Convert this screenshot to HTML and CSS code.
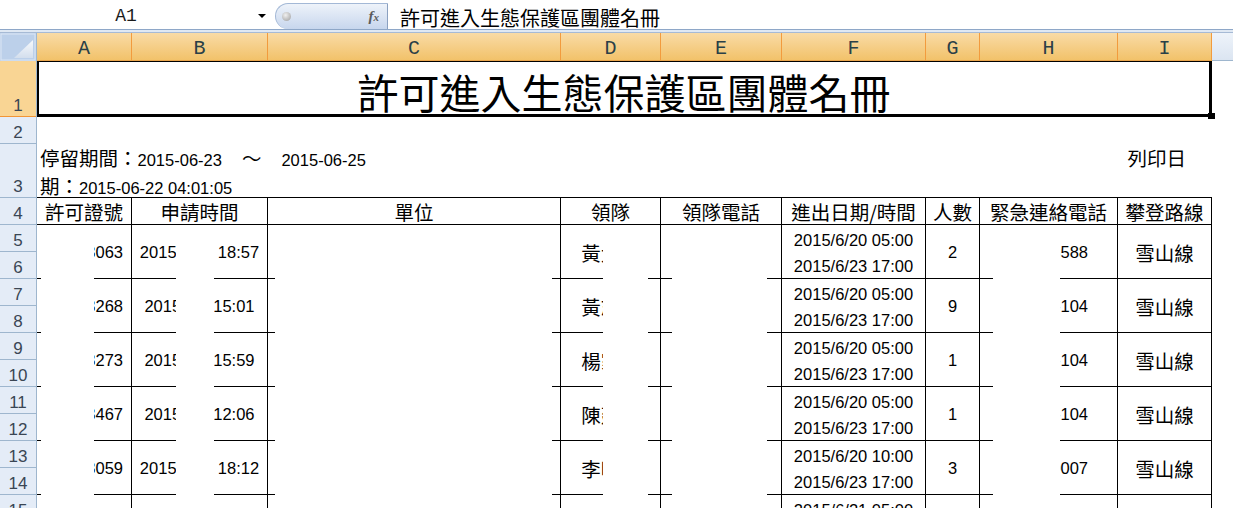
FILE: index.html
```html
<!DOCTYPE html>
<html lang="zh-Hant">
<head>
<meta charset="utf-8">
<title>許可進入生態保護區團體名冊</title>
<link rel="stylesheet" href="styles.css">
</head>
<body>
<div class="fbar">
  <div class="namebox"><span class="ref">A1</span><span class="dd"></span></div>
  <div class="fxbtn"><span class="knob"></span><span class="fx">f<small>x</small></span></div>
  <div class="formula cj">許可進入生態保護區團體名冊</div>
</div>
<div class="fgap"></div>
<div class="colhdr">
  <div class="corner">
    <svg width="36" height="28" viewBox="0 0 36 28">
      <defs>
        <linearGradient id="tri" x1="0" y1="0" x2="0" y2="1">
          <stop offset="0" stop-color="#f7f9fc"/>
          <stop offset="1" stop-color="#d3deed"/>
        </linearGradient>
      </defs>
      <rect x="0" y="0" width="36" height="28" fill="#bcd0ea"/>
      <rect x="1" y="1" width="34" height="26" fill="none" stroke="#dbe6f4"/>
      <polygon points="14,25 33,25 33,7" fill="url(#tri)"/>
    </svg>
  </div>
  <div class="ch wa">A</div>
  <div class="ch wb">B</div>
  <div class="ch wc">C</div>
  <div class="ch wd">D</div>
  <div class="ch we">E</div>
  <div class="ch wf">F</div>
  <div class="ch wg">G</div>
  <div class="ch wh">H</div>
  <div class="ch wi">I</div>
  <div class="rest"></div>
</div>

<div class="band h56">
  <div class="rh"><span class="sel">1</span></div>
  <div class="title cj">許可進入生態保護區團體名冊</div>
</div>
<div class="band h27">
  <div class="rh"><span>2</span></div>
</div>
<div class="band h54">
  <div class="rh"><span>3</span></div>
  <div class="period">
    <div class="pline">
      <span class="cj">停留期間：</span>2015-06-23<span class="cj tilde">～</span><span class="to">2015-06-25</span>
      <span class="cj printed">列印日</span>
    </div>
    <div class="pline"><span class="cj">期：</span>2015-06-22 04:01:05</div>
  </div>
</div>
<div class="band h27">
  <div class="rh"><span>4</span></div>
  <div class="th cj wa">許可證號</div>
  <div class="th cj wb">申請時間</div>
  <div class="th cj wc">單位</div>
  <div class="th cj wd">領隊</div>
  <div class="th cj we">領隊電話</div>
  <div class="th cj wf">進出日期/時間</div>
  <div class="th cj wg">人數</div>
  <div class="th cj wh">緊急連絡電話</div>
  <div class="th cj wi">攀登路線</div>
</div>

<div class="band h54">
  <div class="rh"><span>5</span><span>6</span></div>
  <div class="td num wa">40603063</div>
  <div class="td mid wb">2015/6/19 18:57</div>
  <div class="td wc"></div>
  <div class="td mid cj wd">黃大明</div>
  <div class="td we"></div>
  <div class="td dates wf"><div>2015/6/20 05:00</div><div>2015/6/23 17:00</div></div>
  <div class="td mid wg">2</div>
  <div class="td tel wh">0912363588</div>
  <div class="td mid cj wi">雪山線</div>
</div>
<div class="band h54">
  <div class="rh"><span>7</span><span>8</span></div>
  <div class="td num wa">40603268</div>
  <div class="td mid wb">2015/6/9 15:01</div>
  <div class="td wc"></div>
  <div class="td mid cj wd">黃志強</div>
  <div class="td we"></div>
  <div class="td dates wf"><div>2015/6/20 05:00</div><div>2015/6/23 17:00</div></div>
  <div class="td mid wg">9</div>
  <div class="td tel wh">0911-22-104</div>
  <div class="td mid cj wi">雪山線</div>
</div>
<div class="band h54">
  <div class="rh"><span>9</span><span>10</span></div>
  <div class="td num wa">40603273</div>
  <div class="td mid wb">2015/6/9 15:59</div>
  <div class="td wc"></div>
  <div class="td mid cj wd">楊家豪</div>
  <div class="td we"></div>
  <div class="td dates wf"><div>2015/6/20 05:00</div><div>2015/6/23 17:00</div></div>
  <div class="td mid wg">1</div>
  <div class="td tel wh">0911-22-104</div>
  <div class="td mid cj wi">雪山線</div>
</div>
<div class="band h54">
  <div class="rh"><span>11</span><span>12</span></div>
  <div class="td num wa">40603467</div>
  <div class="td mid wb">2015/6/8 12:06</div>
  <div class="td wc"></div>
  <div class="td mid cj wd">陳建宏</div>
  <div class="td we"></div>
  <div class="td dates wf"><div>2015/6/20 05:00</div><div>2015/6/23 17:00</div></div>
  <div class="td mid wg">1</div>
  <div class="td tel wh">0911-22-104</div>
  <div class="td mid cj wi">雪山線</div>
</div>
<div class="band h54">
  <div class="rh"><span>13</span><span>14</span></div>
  <div class="td num wa">40603059</div>
  <div class="td mid wb">2015/6/18 18:12</div>
  <div class="td wc"></div>
  <div class="td mid cj wd">李明哲</div>
  <div class="td we"></div>
  <div class="td dates wf"><div>2015/6/20 10:00</div><div>2015/6/23 17:00</div></div>
  <div class="td mid wg">3</div>
  <div class="td tel wh">0922100007</div>
  <div class="td mid cj wi">雪山線</div>
</div>
<div class="band h54">
  <div class="rh"><span>15</span><span>16</span></div>
  <div class="td num wa">40603112</div>
  <div class="td mid wb">2015/6/20 09:14</div>
  <div class="td wc"></div>
  <div class="td mid cj wd">王志明</div>
  <div class="td we"></div>
  <div class="td dates wf"><div>2015/6/21 05:00</div><div>2015/6/24 17:00</div></div>
  <div class="td mid wg">4</div>
  <div class="td tel wh">0933215104</div>
  <div class="td mid cj wi">雪山線</div>
</div>

<div class="fill-handle"></div>
<div class="mask m1"></div>
<div class="mask m2"></div>
<div class="mask m3"></div>
<div class="mask m4"></div>
<div class="mask m5"></div>
<div class="mask m6"></div>
</body>
</html>
```

FILE: styles.css
```css
* {box-sizing:border-box;}
body {margin:0;width:1233px;height:508px;overflow:hidden;position:relative;background:#fff;color:#000;
      font-family:"Liberation Sans","Noto Sans CJK TC",sans-serif;font-size:16.5px;}
.cj {font-family:"Noto Sans CJK TC","Liberation Sans",sans-serif;font-size:19.5px;}

/* formula bar */
.fbar {display:flex;height:30px;border-bottom:1px solid #8ea7c8;}
.namebox {width:272px;display:flex;align-items:center;}
.namebox .ref {flex:1;text-align:center;font-family:"Liberation Mono",monospace;font-size:18px;color:#1a1a1a;padding-top:2px;}
.namebox .dd {width:20px;display:flex;justify-content:center;padding-top:2px;}
.namebox .dd::after {content:"";border-left:4px solid transparent;border-right:4px solid transparent;border-top:4px solid #000;}
.fxbtn {width:113px;height:26px;margin:3px 0 0 3px;display:flex;align-items:center;justify-content:space-between;
        padding:0 8px 0 6px;border:1px solid #a3b8d6;border-right-color:#8aa0c0;border-bottom:none;border-radius:14px 0 0 14px;
        background:linear-gradient(#eef3fa,#c7d6ed);}
.knob {width:9px;height:9px;border-radius:50%;background:radial-gradient(circle at 40% 35%,#f0f0f0,#9a9a9a);}
.fx {font-family:"Liberation Serif",serif;font-style:italic;font-weight:bold;font-size:15px;color:#5b5b5b;}
.fx small {font-size:11px;}
.formula {flex:1;display:flex;align-items:center;padding:5px 0 0 12px;font-size:20px;}
.fgap {height:3px;background:#dfe8f3;border-bottom:1px solid #a6bad5;}

/* column headers */
.colhdr {display:flex;height:28px;}
.corner {width:37px;flex:none;border-right:1px solid #9eb6ce;line-height:0;}
.ch {flex:none;display:flex;justify-content:center;align-items:center;padding-top:4px;
     background:linear-gradient(#f9dba6,#f2c26a);border-right:1px solid #f29b3d;border-bottom:1px solid #e9a54c;
     font-family:"Liberation Mono",monospace;font-size:20px;color:#2a4047;}
.rest {flex:1;background:linear-gradient(#eef3fa,#dbe5f1);border-bottom:1px solid #9eb6ce;}

.wa {width:95px;} .wb {width:136px;} .wc {width:293px;} .wd {width:100px;} .we {width:121px;}
.wf {width:144px;} .wg {width:54px;} .wh {width:138px;} .wi {width:94px;}

/* rows */
.band {display:flex;}
.h56 {height:56px;} .h54 {height:54px;} .h27 {height:27px;}
.rh {width:37px;flex:none;display:flex;flex-direction:column;background:#e4ecf7;border-right:1px solid #9eb6ce;}
.rh span {flex:1;display:flex;align-items:flex-end;justify-content:center;border-bottom:1px solid #9eb6ce;
          font-size:17px;line-height:1;color:#3a4654;padding-bottom:2px;}
.rh span.sel {background:#f9d594;border-bottom-color:#f29536;}

.title {width:1175px;display:flex;justify-content:center;align-items:center;padding-top:7px;font-size:41px;line-height:1;
        border-top:1px solid #000;border-left:2px solid #000;border-right:3px solid #000;border-bottom:3px solid #000;}
.fill-handle {position:absolute;left:1208px;top:113px;width:7px;height:6px;background:#000;}

.period {width:1175px;padding:1px 26px 0 3px;border-bottom:1px solid #000;line-height:26px;}
.pline {display:flex;align-items:baseline;white-space:pre;}
.tilde {margin-left:20px;}
.to {margin-left:20px;}
.printed {margin-left:auto;}

.th {flex:none;display:flex;justify-content:center;align-items:center;padding-top:2px;
     border-right:1px solid #000;border-bottom:1px solid #000;line-height:1;white-space:nowrap;}
.td {flex:none;display:flex;align-items:center;border-right:1px solid #000;border-bottom:1px solid #000;white-space:nowrap;}
.td.num {justify-content:flex-end;padding-right:8px;padding-top:2px;}
.td.mid {justify-content:center;padding-top:2px;}
.td.tel {justify-content:flex-end;padding-right:29px;padding-top:2px;}
.td.dates {flex-direction:column;align-items:center;justify-content:flex-start;padding-top:2px;line-height:26px;}

/* blanked-out areas */
.mask {position:absolute;top:225px;bottom:0;background:#fff;}
.m1 {left:41px;width:53px;}
.m2 {left:176px;width:38px;}
.m3 {left:275px;width:277px;}
.m4 {left:603px;width:45px;}
.m5 {left:672px;width:95px;}
.m6 {left:993px;width:67px;}
```
